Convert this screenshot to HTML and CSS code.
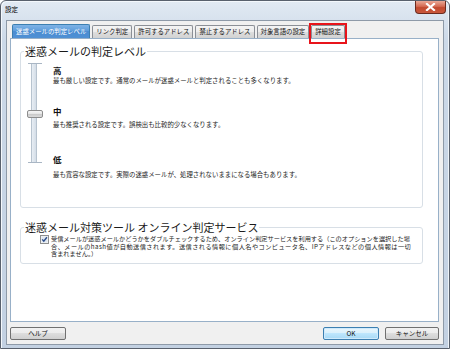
FILE: index.html
```html
<!DOCTYPE html>
<html lang="ja">
<head>
  <meta charset="UTF-8">
  <meta name="viewport" content="width=device-width, initial-scale=1.0">
  <title>設定</title>
  <link rel="stylesheet" href="styles.css">
</head>
<body>
  <div class="window">
    <div class="titlebar">
      <span class="title">設定</span>
      <button class="close" aria-label="閉じる">
        <svg width="11" height="8" viewBox="0 0 11 8"><path d="M2 1 L9 7 M9 1 L2 7" stroke="#fff" stroke-width="2.2" stroke-linecap="square"/></svg>
      </button>
    </div>

    <div class="client">
      <div class="tabs">
        <div class="tab active">迷惑メールの判定レベル</div>
        <div class="tab">リンク判定</div>
        <div class="tab">許可するアドレス</div>
        <div class="tab">禁止するアドレス</div>
        <div class="tab">対象言語の設定</div>
        <div class="tab marked">詳細設定</div>
      </div>

      <div class="panel">
        <fieldset class="group group-level">
          <legend>迷惑メールの判定レベル</legend>
          <div class="level-row">
            <div class="slider">
              <span class="tick"></span>
              <span class="track"></span>
              <span class="tick"></span>
              <span class="thumb"></span>
            </div>
            <div class="levels">
              <div class="level high">
                <div class="level-name">高</div>
                <div class="level-desc">最も厳しい設定です。通常のメールが迷惑メールと判定されることも多くなります。</div>
              </div>
              <div class="level mid">
                <div class="level-name">中</div>
                <div class="level-desc">最も推奨される設定です。誤検出も比較的少なくなります。</div>
              </div>
              <div class="level low">
                <div class="level-name">低</div>
                <div class="level-desc">最も寛容な設定です。実際の迷惑メールが、処理されないままになる場合もあります。</div>
              </div>
            </div>
          </div>
        </fieldset>

        <fieldset class="group group-online">
          <legend>迷惑メール対策ツール オンライン判定サービス</legend>
          <label class="check-row">
            <span class="checkbox">
              <svg width="9" height="9" viewBox="0 0 9 9">
                <rect x="0.5" y="0.5" width="8" height="8" fill="#f6f6f6" stroke="#8e8f8f"/>
                <rect x="1.5" y="1.5" width="6" height="6" fill="#dfe7f0"/>
                <path d="M2.2 4.4 L3.8 6.2 L6.9 2.2" stroke="#2c4d8a" stroke-width="1.4" fill="none"/>
              </svg>
            </span>
            <span class="check-text">受信メールが迷惑メールかどうかをダブルチェックするため、オンライン判定サービスを利用する（このオプションを選択した場<br><span class="wide">合、メールのhash値が自動送信されます。送信される情報に個人名やコンピュータ名、IPアドレスなどの個人情報は一切</span><br>含まれません。）</span>
          </label>
        </fieldset>
      </div>

      <div class="footer">
        <button class="btn">ヘルプ</button>
        <div class="footer-right">
          <button class="btn btn-default">OK</button>
          <button class="btn btn-cancel">キャンセル</button>
        </div>
      </div>
    </div>
  </div>
</body>
</html>
```

FILE: styles.css
```css
body {
  margin: 0;
  background: #fff;
  font-family: "Noto Sans CJK JP", "Liberation Sans", sans-serif;
  color: #1a1a1a;
}

.window {
  width: 450px;
  height: 349px;
  box-sizing: border-box;
  border: 1px solid #59616d;
  border-radius: 6px 6px 0 0;
  background: linear-gradient(#e2eaf3, #ccd9e8 40px, #c3d1e2);
  box-shadow: inset 1px 1px 0 #f4f8fc, inset -1px 0 0 #eef3f8;
  padding-bottom: 3px;
  display: flex;
  flex-direction: column;
}

.titlebar {
  height: 19px;
  display: flex;
  justify-content: space-between;
  align-items: flex-start;
  padding: 0 3px 0 4px;
}

.title {
  font-size: 6.5px;
  line-height: 17px;
  color: #000;
}

.close {
  width: 31px;
  height: 13px;
  padding: 0;
  border: 1px solid #6b2a1e;
  border-top: none;
  border-radius: 0 0 4px 4px;
  background: linear-gradient(#eaa997, #d46a52 45%, #c24a30 55%, #c9583c);
  display: flex;
  align-items: center;
  justify-content: center;
}

.client {
  flex: 1;
  margin: 0 5px;
  border: 1px solid #8e9aa8;
  background: #f0f0f0;
  padding: 3px 4px 4px 3px;
  display: flex;
  flex-direction: column;
}

/* tabs */
.tabs {
  height: 14px;
  display: flex;
  align-items: flex-end;
  gap: 2px;
  padding-left: 2px;
}

.tab {
  position: relative;
  height: 13px;
  box-sizing: border-box;
  padding: 0 3px;
  border: 1px solid #8b8f96;
  border-bottom: none;
  border-radius: 2px 2px 0 0;
  background: linear-gradient(#f4f4f4, #ebebeb 50%, #dedede 50%, #d2d2d2);
  font-size: 6.4px;
  line-height: 12px;
  white-space: nowrap;
  color: #111;
}

.tab.active {
  height: 14px;
  border-color: #3c7fb1;
  background: linear-gradient(#7fb3e6, #5a9ad9 50%, #4a8cd2 50%, #4f90d4);
  color: #fff;
  line-height: 13px;
}

.tab.marked::after {
  content: "";
  position: absolute;
  top: -3px;
  left: -3px;
  right: -3px;
  bottom: -6px;
  border: 2px solid #e8141b;
}

/* panel */
.panel {
  height: 284px;
  box-sizing: border-box;
  border: 1px solid #98b0c8;
  background: #fff;
  padding: 6px 15px 0 9px;
}

.group {
  margin: 0;
  padding: 5px 6px 0;
  border: 1px solid #d8dfe6;
  border-radius: 3px;
  box-sizing: border-box;
}

.group legend {
  font-size: 11px;
  line-height: 13px;
  padding: 0 1px;
  margin-left: -3px;
  color: #1a1a1a;
}

.group-level {
  height: 163px;
}

.group-online {
  height: 43px;
  margin-top: 13px;
  padding-top: 1px;
}

.level-row {
  display: flex;
  gap: 10px;
}

/* slider */
.slider {
  position: relative;
  width: 16px;
  height: 100px;
  display: flex;
  flex-direction: column;
  align-items: center;
}

.tick {
  width: 14px;
  height: 1px;
  background: #a9b6c4;
}

.track {
  flex: 1;
  width: 4px;
  border: 1px solid #b7c3cf;
  border-top: none;
  border-bottom: none;
  background: linear-gradient(90deg, #e8eef4, #d4dde7);
  margin-left: -2px;
}

.thumb {
  position: absolute;
  top: 47px;
  left: 0;
  width: 16px;
  height: 8px;
  box-sizing: border-box;
  border: 1px solid #8d8d8d;
  border-radius: 2px;
  background: linear-gradient(#f6f6f6, #e6e6e6 45%, #c9c9c9 55%, #dcdcdc);
}

/* levels */
.levels {
  display: flex;
  flex-direction: column;
}

.level-name {
  font-size: 8.5px;
  line-height: 10px;
  font-weight: bold;
  color: #111;
}

.level-desc {
  font-size: 6.4px;
  line-height: 9px;
  white-space: nowrap;
  color: #222;
}

.level.high { margin-top: 2px; }
.level.high .level-desc { margin-top: 1px; }
.level.mid { margin-top: 21px; }
.level.mid .level-desc { margin-top: 4px; }
.level.low { margin-top: 25px; }
.level.low .level-desc { margin-top: 6px; }

/* checkbox row */
.check-row {
  display: flex;
  align-items: flex-start;
  gap: 2px;
  margin-left: 13px;
}

.checkbox {
  display: flex;
  width: 9px;
  height: 9px;
}

.check-text {
  font-size: 6.2px;
  line-height: 7.5px;
  white-space: nowrap;
  color: #222;
}

.check-text .wide {
  letter-spacing: 0.45px;
}

/* footer */
.footer {
  margin-top: 5px;
  height: 13px;
  display: flex;
  justify-content: space-between;
}

.footer-right {
  display: flex;
  gap: 6px;
}

.btn {
  width: 56px;
  height: 13px;
  padding: 0;
  border: 1px solid #707070;
  border-radius: 2px;
  background: linear-gradient(#f2f2f2, #ebebeb 50%, #dddddd 50%, #cfcfcf);
  font-family: inherit;
  font-size: 6.5px;
  line-height: 11px;
  color: #111;
}

.btn-default {
  border-color: #3c7fb1;
  background: linear-gradient(#eaf6fd, #d9f0fc 50%, #bee6fd 50%, #a7d9f5);
  box-shadow: inset 0 0 0 1px #cfeafc;
}

.btn-cancel {
  width: 54px;
}
```
